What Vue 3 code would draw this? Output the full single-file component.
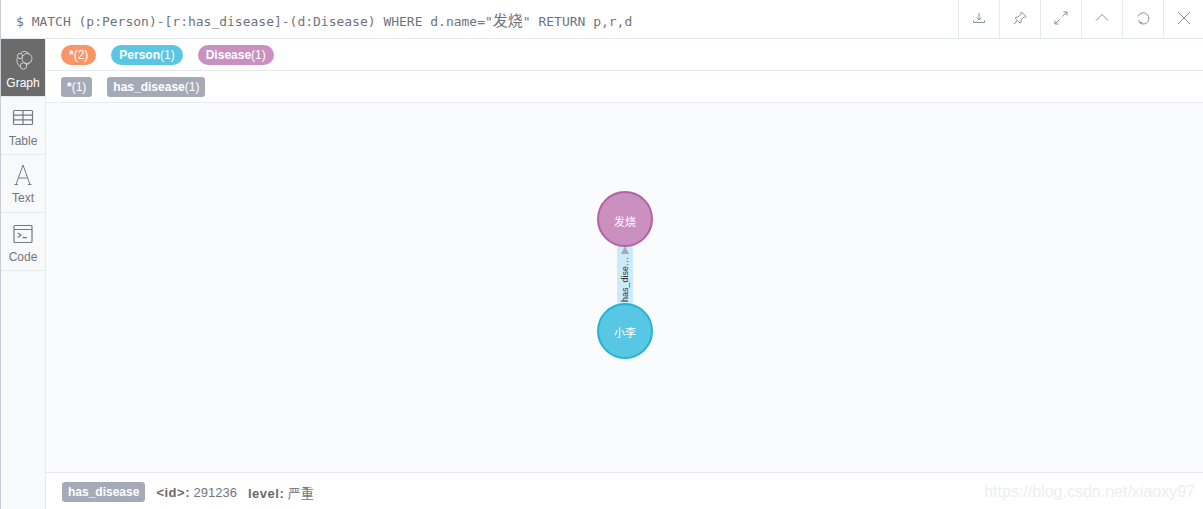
<template>
  <div class="frame">
    <div class="query-bar">
      <div class="query">$ MATCH (p:Person)-[r:has_disease]-(d:Disease) WHERE d.name="<span class="cjk-query">发烧</span>" RETURN p,r,d</div>
      <div class="actions">
        <button v-for="a in actions" :key="a.name" class="action" :title="a.name">
          <svg width="16" height="16" viewBox="0 0 16 16" fill="none" stroke="#8b8f96" stroke-width="1">
            <path v-for="(d, i) in a.paths" :key="i" :d="d" />
          </svg>
        </button>
      </div>
    </div>
    <div class="body">
      <nav class="sidebar">
        <div v-for="t in tabs" :key="t.name" class="tab" :class="{ active: t.active }">
          <svg class="tab-icon" width="24" height="24" viewBox="0 0 24 24" fill="none" :stroke="t.active ? '#cfcfcf' : '#757a82'" stroke-width="1.2">
            <template v-if="t.name === 'Graph'">
              <circle cx="16" cy="10.5" r="5" stroke-width="1" />
              <circle cx="12.5" cy="18" r="3.2" stroke-width="1" />
              <circle cx="9" cy="8" r="2.6" stroke-width="1" />
              <path d="M6.5 9.5 C5 13 6.5 17 9.5 19 M10 4.6 C12 3 15 3 17.5 5 M15 17 C17 16.5 19 15 20.5 12.5" stroke-width="1" />
            </template>
            <template v-else-if="t.name === 'Table'">
              <rect x="2.5" y="4.5" width="19" height="14" rx="1" />
              <path d="M2.5 9.2 H21.5 M2.5 13.8 H21.5 M12 4.5 V18.5" />
            </template>
            <template v-else-if="t.name === 'Text'">
              <path d="M5 20.5 L12 1 L19 20.5 M7.5 14 H16.5 M3.5 20.5 H7 M17 20.5 H20.5" stroke-width="1" />
            </template>
            <template v-else>
              <rect x="3" y="3.5" width="18" height="17" rx="1" />
              <path d="M3 7.5 H21 M7 11 L10 13.2 L7 15.4 M11.5 15.6 H16" />
            </template>
          </svg>
          <span>{{ t.name }}</span>
        </div>
      </nav>
      <main class="main">
        <div class="legend">
          <span v-for="l in labels" :key="l.name" class="pill" :style="{ background: l.color }">{{ l.name }}<span class="count">{{ l.count }}</span></span>
        </div>
        <div class="legend">
          <span v-for="r in relTypes" :key="r.name" class="tag">{{ r.name }}<span class="count">{{ r.count }}</span></span>
        </div>
        <div class="canvas">
          <svg class="graph" width="1157" height="369" viewBox="0 0 1157 369">
            <rect x="571" y="142" width="16" height="60" fill="#cdeafb" />
            <path d="M579 143 L583 151 L575 151 Z" fill="#a5abb6" />
            <text class="edge-label" transform="translate(582 199) rotate(-90)">has_dise…</text>
            <circle cx="579" cy="116" r="27" fill="#c990c0" stroke="#b261a5" stroke-width="2" />
            <text class="node-label" x="579" y="123">发烧</text>
            <circle cx="579" cy="228" r="27" fill="#57c7e3" stroke="#23b3d7" stroke-width="2" />
            <text class="node-label" x="579" y="234">小李</text>
          </svg>
        </div>
        <div class="status">
          <span class="tag status-tag">has_disease</span>
          <span class="prop"><b>&lt;id&gt;:</b> 291236</span>
          <span class="prop"><b>level:</b> 严重</span>
          <span class="watermark">https://blog.csdn.net/xiaoxy97</span>
        </div>
      </main>
    </div>
  </div>
</template>

<script setup>
const actions = [
  { name: 'Download', paths: ['M8 3 V10 M5.5 7.5 L8 10 L10.5 7.5', 'M2.5 10.5 V12.5 H13.5 V10.5'] },
  { name: 'Pin', paths: ['M9.5 2 L14 6.5 L12.8 7.2 L11.8 7 L9 10 L9 12.3 L8 13 L3.2 8 L4 7.2 L6.2 7 L9 4.2 L8.9 3 Z', 'M5.5 10.5 L2 14'] },
  { name: 'Fullscreen', paths: ['M9.5 6.5 L14 2 M10.5 2 H14 V5.5', 'M6.5 9.5 L2 14 M2 10.5 V14 H5.5'] },
  { name: 'Collapse', paths: ['M2 10.5 L8 4.5 L14 10.5'] },
  { name: 'Rerun', paths: ['M5 13 A5.6 5.6 0 1 0 3 6.5', 'M5 13 L3.6 10 M5 13 L7.4 12.4'] },
  { name: 'Close', paths: ['M2 2 L14 14 M14 2 L2 14'] }
]

const tabs = [
  { name: 'Graph', active: true },
  { name: 'Table' },
  { name: 'Text' },
  { name: 'Code' }
]

const labels = [
  { name: '*', count: '(2)', color: '#fb9566' },
  { name: 'Person', count: '(1)', color: '#57c7e3' },
  { name: 'Disease', count: '(1)', color: '#c990c0' }
]

const relTypes = [
  { name: '*', count: '(1)' },
  { name: 'has_disease', count: '(1)' }
]
</script>

<style>
html,
body {
  margin: 0;
  background: #fff;
}
</style>

<style scoped>
.frame {
  width: 1203px;
  height: 509px;
  display: flex;
  flex-direction: column;
  overflow: hidden;
  font-family: "Liberation Sans", Arial, "Noto Sans CJK SC", sans-serif;
  box-sizing: border-box;
  border-left: 1px solid #c9ccd3;
}

.query-bar {
  height: 39px;
  flex: none;
  display: flex;
  justify-content: space-between;
  box-sizing: border-box;
  border-bottom: 1px solid #e6e9ef;
  background: #fff;
}

.query {
  padding: 11px 0 0 15px;
  font-family: "DejaVu Sans Mono", monospace;
  font-size: 13px;
  line-height: 17px;
  letter-spacing: -0.01px;
  color: #6f747c;
  white-space: pre;
}

.cjk-query {
  font-family: "Noto Sans CJK SC", sans-serif;
  font-size: 15px;
}

.actions {
  display: flex;
}

.action {
  width: 41px;
  height: 38px;
  padding: 0 0 2px;
  box-sizing: border-box;
  display: flex;
  align-items: center;
  justify-content: center;
  background: #fff;
  border: none;
  border-left: 1px solid #e6e9ef;
}

.action:last-child {
  width: 40px;
}

.body {
  flex: 1;
  display: flex;
  min-height: 0;
}

.sidebar {
  width: 45px;
  flex: none;
  box-sizing: border-box;
  background: #f8f9fb;
  border-right: 1px solid #e6e9ef;
}

.tab {
  height: 58px;
  box-sizing: border-box;
  display: flex;
  flex-direction: column;
  align-items: center;
  padding-top: 9px;
  border-bottom: 1px solid #e6e9ef;
  font-size: 12px;
  line-height: 14px;
  color: #717680;
}

.tab-icon {
  margin-bottom: 4px;
}

.tab:nth-child(3) .tab-icon {
  margin-bottom: 3px;
}

.tab.active {
  background: #6b6b6b;
  background-clip: padding-box;
  color: #fff;
}

.main {
  flex: 1;
  display: flex;
  flex-direction: column;
  min-width: 0;
}

.legend {
  height: 32px;
  flex: none;
  box-sizing: border-box;
  display: flex;
  align-items: center;
  gap: 15px;
  padding-left: 15px;
  border-bottom: 1px solid #e6e9ef;
  background: #fff;
}

.pill {
  height: 20px;
  min-width: 35px;
  box-sizing: border-box;
  padding: 0 8px;
  border-radius: 10px;
  font-size: 12px;
  font-weight: bold;
  line-height: 20px;
  text-align: center;
  color: #fff;
}

.tag {
  height: 20px;
  min-width: 31px;
  box-sizing: border-box;
  padding: 0 6px;
  border-radius: 3px;
  background: #a5abb6;
  font-size: 12px;
  font-weight: bold;
  line-height: 20px;
  text-align: center;
  color: #fff;
}

.count {
  font-weight: normal;
}

.canvas {
  flex: 1;
  min-height: 0;
  background: #fafbfd;
}

.graph {
  display: block;
}

.node-label {
  font-family: "Noto Sans CJK SC", sans-serif;
  font-size: 11px;
  fill: #fff;
  text-anchor: middle;
}

.edge-label {
  font-family: "Liberation Sans", sans-serif;
  font-size: 9px;
  fill: #333;
}

.status {
  height: 37px;
  flex: none;
  box-sizing: border-box;
  display: flex;
  align-items: center;
  gap: 11px;
  padding: 2px 8px 0 16px;
  border-top: 1px solid #e6e9ef;
  background: #fff;
  font-size: 13px;
  color: #717680;
}

.prop b {
  color: #6f6a65;
  letter-spacing: 0.5px;
}

.watermark {
  margin-left: auto;
  font-size: 16px;
  color: #eceef1;
}
</style>
